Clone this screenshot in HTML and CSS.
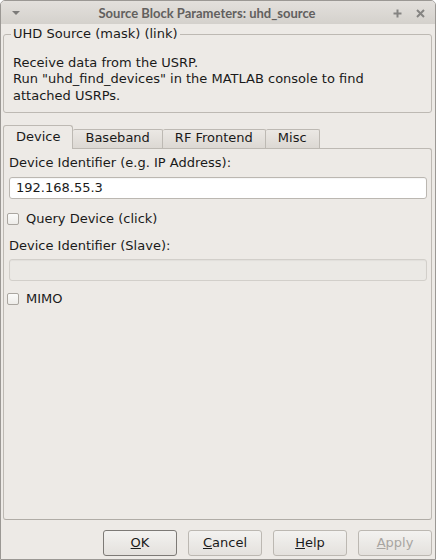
FILE: index.html
```html
<!DOCTYPE html>
<html>
<head>
<meta charset="utf-8">
<link rel="stylesheet" href="styles.css">
</head>
<body>
<div class="window">
  <div class="titlebar">
    <svg class="menu-arrow" width="8" height="5" viewBox="0 0 8 5"><polygon points="0,0 8,0 4,4" fill="#7c7b79"/></svg>
    <span class="title">Source Block Parameters: uhd_source</span>
    <div class="controls">
      <svg width="9" height="9" viewBox="0 0 9 9"><path d="M4.5 0.5v8M0.5 4.5h8" stroke="#858482" stroke-width="2"/></svg>
      <svg width="9" height="9" viewBox="0 0 9 9"><path d="M1 1l7 7M8 1l-7 7" stroke="#858482" stroke-width="2"/></svg>
    </div>
  </div>
  <div class="main">
    <fieldset class="group">
      <legend>UHD Source (mask) (link)</legend>
      <p class="desc">Receive data from the USRP.<br>Run "uhd_find_devices" in the MATLAB console to find<br>attached USRPs.</p>
    </fieldset>
    <div class="tabs">
      <div class="tab active">Device</div>
      <div class="tab">Baseband</div>
      <div class="tab">RF Frontend</div>
      <div class="tab">Misc</div>
    </div>
    <div class="pane">
      <div class="label">Device Identifier (e.g. IP Address):</div>
      <div class="input">192.168.55.3</div>
      <div class="check first"><span class="box"></span><span>Query Device (click)</span></div>
      <div class="label second">Device Identifier (Slave):</div>
      <div class="input disabled"></div>
      <div class="check last"><span class="box"></span><span>MIMO</span></div>
    </div>
    <div class="buttons">
      <div class="btn default"><u>O</u>K</div>
      <div class="btn"><u>C</u>ancel</div>
      <div class="btn"><u>H</u>elp</div>
      <div class="btn disabled"><u>A</u>pply</div>
    </div>
  </div>
</div>
</body>
</html>
```
FILE: styles.css
```css
html, body {
  margin: 0;
  padding: 0;
  background: #ffffff;
}
body {
  font-family: "DejaVu Sans", sans-serif;
  font-size: 13px;
  line-height: 16.6px;
  color: #1a1a1a;
}
.window {
  width: 436px;
  height: 560px;
  box-sizing: border-box;
  border: 1px solid #9b9894;
  border-radius: 5px 5px 0 0;
  background: #edeae6;
  display: flex;
  flex-direction: column;
  overflow: hidden;
}
.titlebar {
  height: 23px;
  flex: none;
  background: linear-gradient(#e3e0dc, #d4d1cc);
  display: flex;
  align-items: center;
  position: relative;
}
.menu-arrow {
  margin-left: 11px;
  margin-top: 1px;
}
.title {
  flex: 1;
  text-align: center;
  font-family: "Lato", sans-serif;
  font-weight: bold;
  font-size: 13px;
  color: #62605e;
  margin-left: 1px;
  margin-top: 2px;
}
.controls {
  display: flex;
  gap: 14px;
  margin-right: 10px;
  margin-top: 1px;
}
.main {
  flex: 1;
  display: flex;
  flex-direction: column;
  padding: 2px 3px 3px 2px;
}
.group {
  margin: 0;
  padding: 0 8px 8px 9px;
  border: 1px solid #bdb9b3;
  border-radius: 3px;
  min-width: 0;
}
.group legend {
  padding: 0 2px;
  margin-left: -2px;
  color: #1a1a1a;
}
.desc {
  margin: 12px 0 0 0;
}
.tabs {
  display: flex;
  align-items: flex-end;
  margin-top: 12px;
  position: relative;
  z-index: 1;
}
.tab {
  height: 18px;
  border: 1px solid #bdb9b3;
  border-bottom: none;
  border-left: none;
  border-radius: 2px 2px 0 0;
  background: linear-gradient(#ebe8e4, #dcd8d3);
  padding: 0 12px;
  color: #1a1a1a;
}
.tab.active {
  height: 20px;
  padding-top: 3px;
  margin-bottom: -1px;
  border-left: 1px solid #bdb9b3;
  background: #edeae6;
  padding-left: 12px;
  padding-right: 12px;
  border-radius: 3px 3px 0 0;
}
.pane {
  flex: 1;
  border: 1px solid #bdb9b3;
  border-bottom-color: #b0aca6;
  border-radius: 0 3px 3px 3px;
  padding: 6px 4px 0 5px;
  display: flex;
  flex-direction: column;
}
.input {
  height: 20px;
  margin-top: 5px;
  border: 1px solid #bbb7b1;
  border-radius: 3px;
  background: #ffffff;
  padding: 0 6px;
  line-height: 20px;
  box-shadow: inset 0 1px 1px rgba(0,0,0,0.04);
}
.input.disabled {
  background: #ebe9e5;
  border-color: #d2cfca;
}
.check {
  display: flex;
  align-items: center;
  margin-left: -2px;
}
.check.first { margin-top: 12px; }
.check.last { margin-top: 10px; }
.label.second { margin-top: 10px; }
.box {
  width: 10px;
  height: 10px;
  border: 1px solid #aaa6a0;
  border-radius: 2px;
  background: linear-gradient(#fbfbfa, #eeece9);
  margin-right: 7px;
}
.buttons {
  display: flex;
  justify-content: flex-end;
  gap: 11px;
  margin-top: 10px;
}
.btn {
  width: 72px;
  height: 24px;
  border: 1px solid #bcb8b2;
  border-radius: 3px;
  background: linear-gradient(#f3f2f0, #e4e1dd);
  display: flex;
  align-items: center;
  justify-content: center;
  color: #1a1a1a;
}
.btn.default {
  border-color: #7d7a76;
}
.btn.disabled {
  color: #a8a5a1;
}
```
